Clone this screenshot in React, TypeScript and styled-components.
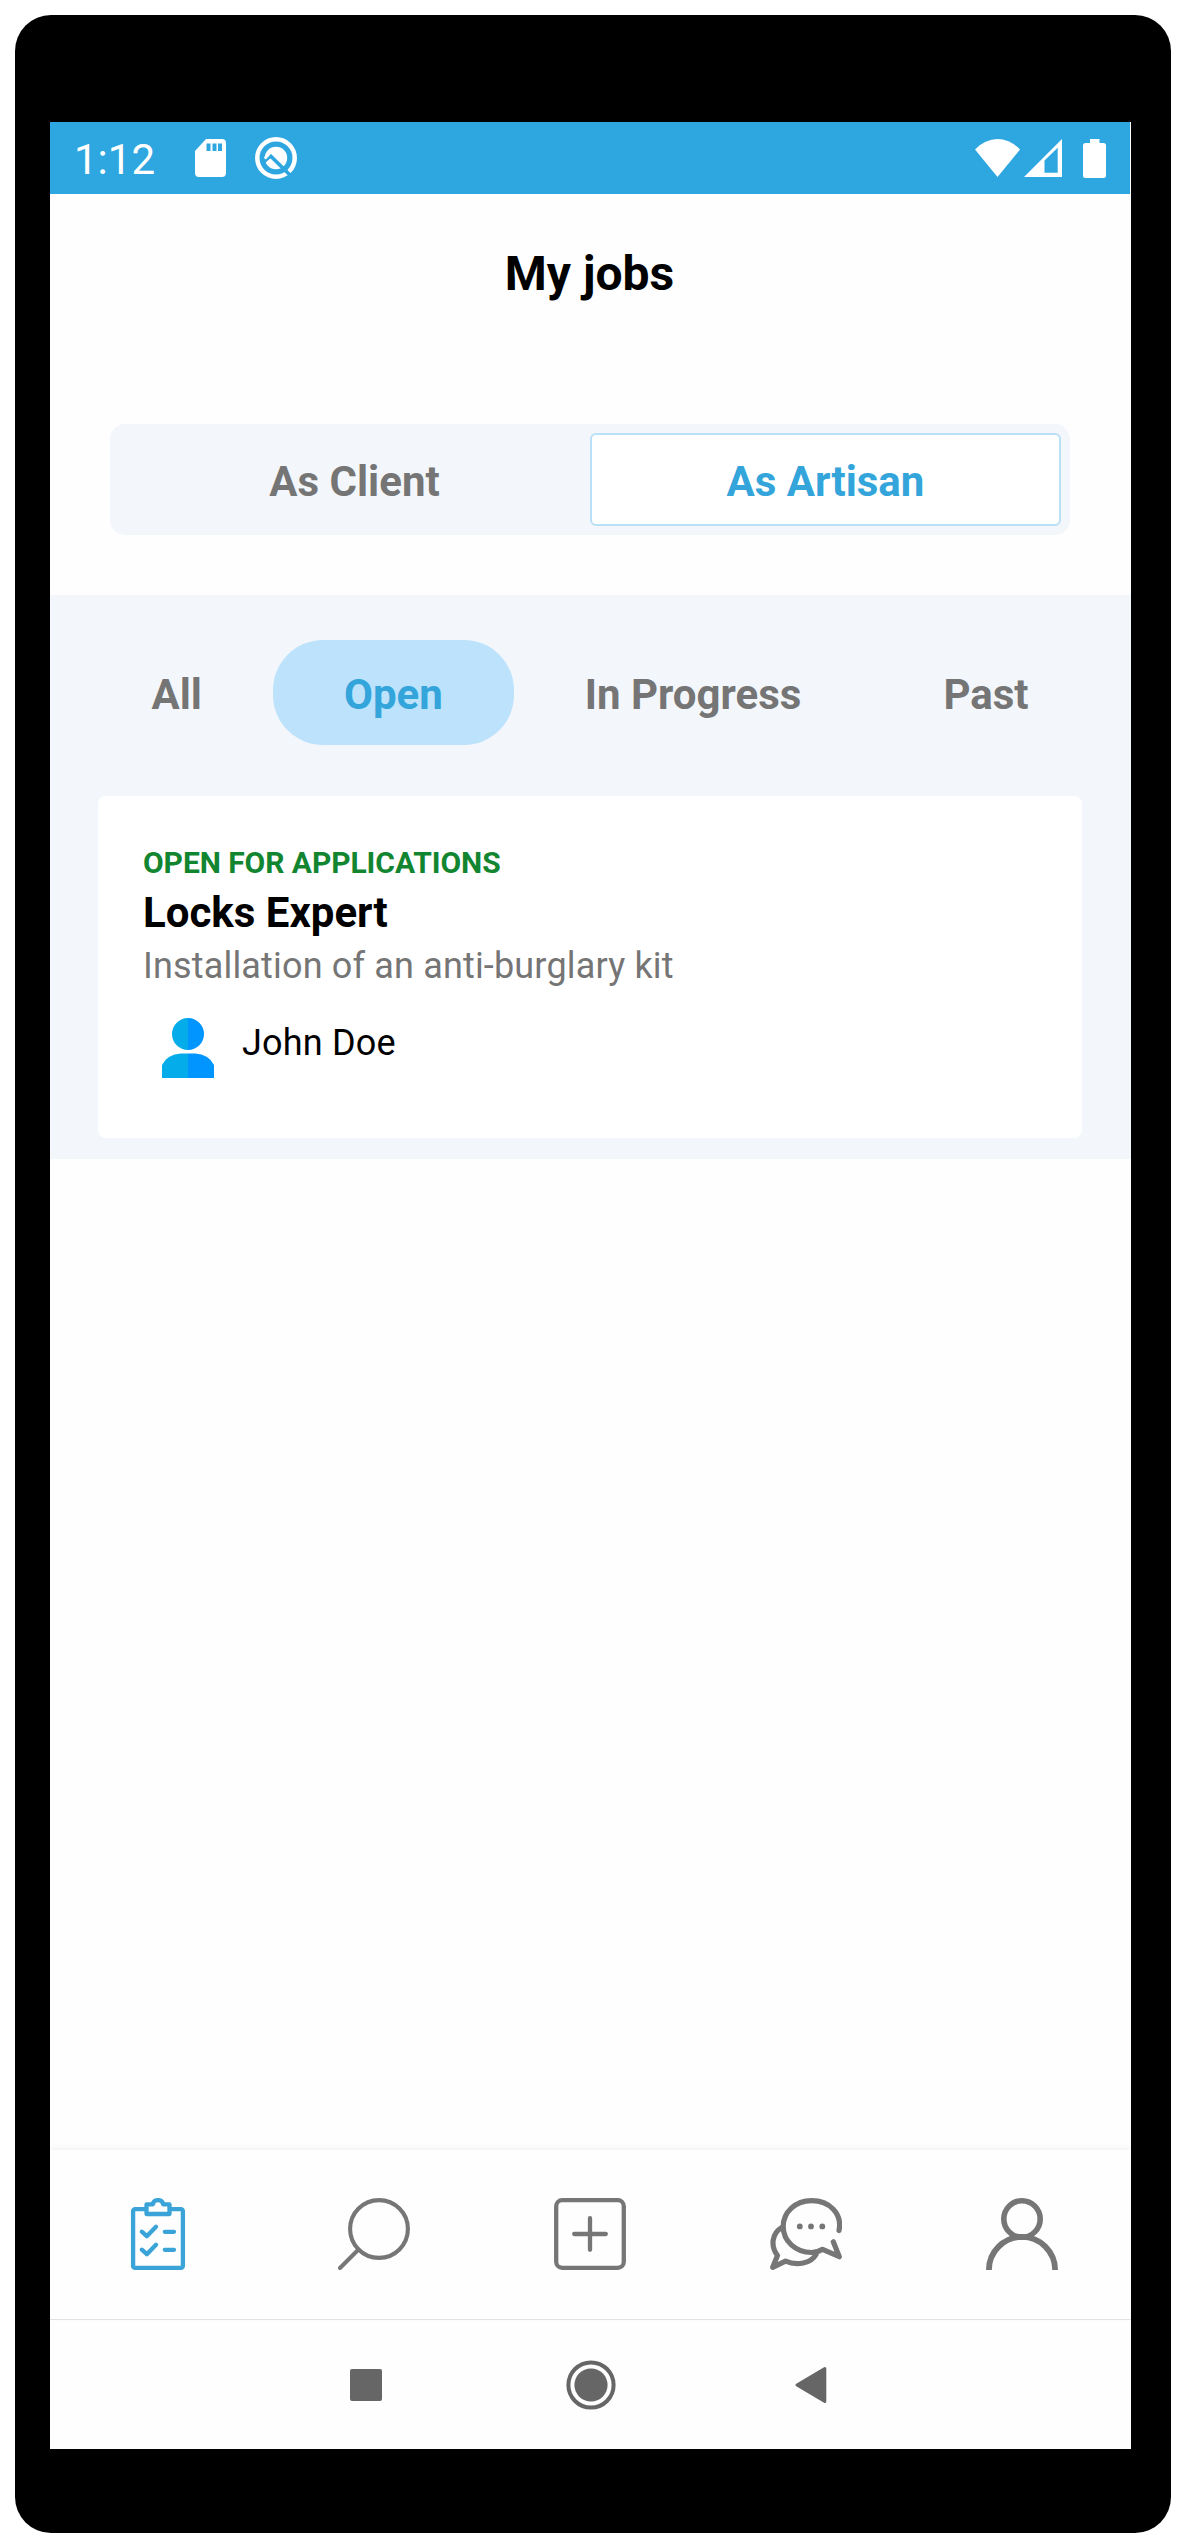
import React from "react";
import styled, { createGlobalStyle } from "styled-components";

const BLUE = "#2ea6e0";
const TEXT_BLUE = "#33a5db";
const GREY = "#757575";

const GlobalStyle = createGlobalStyle`
  *, *::before, *::after { box-sizing: border-box; }
  html, body { margin: 0; background: #fff; }
  body { font-family: Roboto, "Liberation Sans", sans-serif; color: #000; }
  button { border: 0; background: none; padding: 0; font: inherit; color: inherit; }
  svg { display: block; flex: none; }
`;

const Page = styled.div`
  width: 1184px;
  height: 2544px;
  padding: 15px 13px 11px 15px;
  background: #fff;
`;

const Device = styled.div`
  height: 2518px;
  padding: 107px 40px 84px 35px;
  border-radius: 36px;
  background: #000;
`;

const Screen = styled.main`
  display: flex;
  flex-direction: column;
  height: 2327px;
  background: #fefefe;
`;

const StatusBar = styled.header`
  display: flex;
  align-items: center;
  height: 72px;
  padding: 0 24px 0 24px;
  margin-right: 1px;
  background: ${BLUE};
  color: #fff;
`;

const Clock = styled.time`
  width: 121px;
  padding-top: 3px;
  font-size: 42px;
  line-height: 48px;
`;

const StatusGroup = styled.div<{ $gap: number; $end?: boolean }>`
  display: flex;
  align-items: center;
  gap: ${(p) => p.$gap}px;
  margin-left: ${(p) => (p.$end ? "auto" : "0")};
`;

const BatterySlot = styled.span`
  padding-left: 17px;
`;

const Title = styled.h1`
  margin: 0;
  padding: 50px 2px 0 0;
  height: 230px;
  font-size: 48px;
  font-weight: 700;
  line-height: 60px;
  text-align: center;
`;

const Segmented = styled.div`
  display: flex;
  height: 111px;
  margin: 0 61px 60px 60px;
  padding: 9px;
  border-radius: 15px;
  background: #f3f7fc;
`;

const Segment = styled.button<{ $active?: boolean }>`
  flex: 1;
  padding-top: 4px;
  border: 2px solid ${(p) => (p.$active ? "#b9e0f7" : "transparent")};
  border-radius: 6px;
  background: ${(p) => (p.$active ? "#fff" : "transparent")};
  color: ${(p) => (p.$active ? TEXT_BLUE : GREY)};
  font-size: 42px;
  font-weight: 700;
`;

const Jobs = styled.section`
  height: 564px;
  padding: 45px 49px 21px 48px;
  background: #f3f7fc;
`;

const Filters = styled.nav`
  display: flex;
  justify-content: center;
  height: 105px;
  margin-bottom: 51px;
`;

const Filter = styled.button<{ $active?: boolean }>`
  padding: 4px 71px 0;
  border-radius: 50px;
  background: ${(p) => (p.$active ? "#bde2fb" : "transparent")};
  color: ${(p) => (p.$active ? TEXT_BLUE : GREY)};
  font-size: 42px;
  font-weight: 700;
  white-space: nowrap;
`;

const Card = styled.article`
  display: flex;
  flex-direction: column;
  height: 342px;
  padding: 49px 45px 0;
  border-radius: 8px;
  background: #fff;
`;

const JobStatus = styled.div`
  color: #11852f;
  font-size: 30px;
  font-weight: 700;
  line-height: 36px;
  letter-spacing: -0.06px;
`;

const JobTitle = styled.h2`
  margin: 7px 0 0;
  font-size: 42px;
  font-weight: 700;
  line-height: 50px;
`;

const JobText = styled.p`
  margin: 6px 0 30px;
  color: ${GREY};
  font-size: 36px;
  line-height: 44px;
  letter-spacing: 0.17px;
`;

const Person = styled.div`
  display: flex;
  gap: 28px;
  padding-left: 19px;
`;

const PersonName = styled.span`
  padding-top: 3px;
  font-size: 36px;
  line-height: 44px;
  letter-spacing: 0.17px;
`;

const Spacer = styled.div`
  flex: 1;
`;

const TabBar = styled.nav`
  display: flex;
  height: 170px;
  padding-right: 1px;
  border-bottom: 1px solid #e2e2e2;
  box-shadow: 0 -2px 5px rgba(0, 0, 0, 0.05);
  background: #fefefe;
`;

const Tab = styled.button<{ $active?: boolean }>`
  display: flex;
  flex: 1;
  justify-content: center;
  padding-top: 48px;
  color: ${(p) => (p.$active ? "#3aa4d8" : "#767676")};
`;

const SystemBar = styled.footer`
  display: grid;
  grid-template-columns: 216px 229px 32px;
  justify-content: start;
  align-items: center;
  height: 129px;
  padding-left: 300px;
  color: #666;
`;

const SdCard = () => (
  <svg width="31" height="38" viewBox="0 0 31 38">
    <path fill="#fff" fillRule="evenodd" d="M11 0H27Q31 0 31 4V34Q31 38 27 38H4Q0 38 0 34V12ZM11.5 4.5V12H15.5V4.5ZM17.5 4.5V12H21.5V4.5ZM23 4.5V12H27V4.5Z" />
  </svg>
);

const DebugBadge = () => (
  <svg width="42" height="42" viewBox="0 0 42 42">
    <circle cx="21" cy="21" r="18.700" fill="none" stroke="#fff" strokeWidth="4.500" />
    <circle cx="21" cy="21" r="11.200" fill="#fff" />
    <path d="M8 25.500L15.500 19L36 39" fill="none" stroke={BLUE} strokeWidth="3.600" />
    <path d="M9.800 21.500L15.500 15.500" fill="none" stroke="#fff" strokeWidth="2.600" />
  </svg>
);

const Wifi = () => (
  <svg width="45" height="38" viewBox="0 0 45 38">
    <path fill="#fff" d="M0 10.5Q10 0 22.5 0T45 10.5L22.5 38Z" />
  </svg>
);

const Signal = () => (
  <svg width="38" height="38" viewBox="0 0 38 38">
    <path fill="#fff" fillRule="evenodd" d="M0 38L38 0V38ZM20.5 21.5V33.7H33.7V8.7Z" />
  </svg>
);

const Battery = () => (
  <svg width="23" height="39" viewBox="0 0 23 39">
    <path fill="#fff" d="M7 0H16.5V4H20.5Q23 4 23 6.5V36.5Q23 39 20.5 39H2.5Q0 39 0 36.5V6.5Q0 4 2.5 4H7Z" />
  </svg>
);

const Avatar = () => (
  <svg width="52" height="60" viewBox="0 0 52 60">
    <path fill="#04ade9" d="M26 0A16 16 0 0 0 26 32ZM26 35.5H19Q5 36.5 0 47V60H26Z" />
    <path fill="#0095ff" d="M26 0A16 16 0 0 1 26 32ZM26 35.5H33Q47 36.5 52 47V60H26Z" />
  </svg>
);

const TabIcon = ({ children }: { children: React.ReactNode }) => (
  <svg width="72" height="72" viewBox="0 0 72 72" fill="none" stroke="currentColor" strokeWidth="4.3" strokeLinecap="round" strokeLinejoin="round">
    {children}
  </svg>
);

const ClipboardIcon = () => (
  <TabIcon>
    <rect x="11.1" y="11.1" width="49.8" height="58.8" rx="2" />
    <path fill="#fefefe" d="M24.5 16V6.4H30.8C31.7 .7 40.3 .7 41.2 6.4H47.5V16Z" />
    <path d="M19.8 33.7L24.8 38.2L34 28.7M42.8 33.8H52M19.8 51.7L24.8 56.2L34 46.7M42.8 51.8H52" />
  </TabIcon>
);

const SearchIcon = () => (
  <TabIcon>
    <circle cx="41" cy="31" r="28.9" strokeWidth="4.1" />
    <path d="M20.5 51.5L2 70" strokeWidth="4" />
  </TabIcon>
);

const AddIcon = () => (
  <TabIcon>
    <rect x="2.2" y="2.2" width="67.6" height="67.6" rx="6" />
    <path d="M36 20.2V51.8M20.2 36H51.8" />
  </TabIcon>
);

const ChatIcon = () => (
  <TabIcon>
    <g strokeWidth="5.2">
      <path d="M69 32.5C72.5 15.5 59.5 2.6 41.5 2.6C25.5 2.6 13.2 14 13.2 28.5C13.2 43 25.5 54.5 41.5 54.5Q47.5 54.5 52.6 51.3L69.3 58.7L63.3 43.8" />
      <path d="M11.8 29.5C1.5 35.5 .5 48.5 7.5 57.5L2.7 69.3L15.5 63.2C27 68 41 65.5 46 56.5" />
    </g>
    <g fill="currentColor" stroke="none">
      <circle cx="29.8" cy="28.4" r="2.9" />
      <circle cx="41" cy="28.4" r="2.9" />
      <circle cx="52.3" cy="28.4" r="2.9" />
    </g>
  </TabIcon>
);

const ProfileIcon = () => (
  <TabIcon>
    <circle cx="36" cy="21" r="18.2" strokeWidth="5.6" />
    <path d="M2.9 72A33.1 33.1 0 0 1 69.1 72" strokeWidth="5.8" strokeLinecap="butt" />
  </TabIcon>
);

const RecentsKey = () => (
  <svg width="32" height="32" viewBox="0 0 32 32"><rect width="32" height="32" rx="2" fill="currentColor" /></svg>
);

const HomeKey = () => (
  <svg width="50" height="50" viewBox="0 0 50 50">
    <circle cx="25" cy="25" r="22.6" fill="none" stroke="currentColor" strokeWidth="4" />
    <circle cx="25" cy="25" r="16.6" fill="currentColor" />
  </svg>
);

const BackKey = () => (
  <svg width="32" height="38" viewBox="0 0 32 38">
    <path d="M2 19L29.8 2.5V35.5Z" fill="currentColor" stroke="currentColor" strokeWidth="3" strokeLinejoin="round" />
  </svg>
);

const filters = ["All", "Open", "In Progress", "Past"];

const tabs = [
  { name: "Jobs", Icon: ClipboardIcon },
  { name: "Search", Icon: SearchIcon },
  { name: "Add", Icon: AddIcon },
  { name: "Messages", Icon: ChatIcon },
  { name: "Profile", Icon: ProfileIcon },
];

export default function App() {
  return (
    <>
      <GlobalStyle />
      <Page>
        <Device>
          <Screen>
            <StatusBar>
              <Clock>1:12</Clock>
              <StatusGroup $gap={29}>
                <SdCard />
                <DebugBadge />
              </StatusGroup>
              <StatusGroup $gap={4} $end>
                <Wifi />
                <Signal />
                <BatterySlot><Battery /></BatterySlot>
              </StatusGroup>
            </StatusBar>
            <Title>My jobs</Title>
            <Segmented>
              <Segment>As Client</Segment>
              <Segment $active>As Artisan</Segment>
            </Segmented>
            <Jobs>
              <Filters>
                {filters.map((label) => (
                  <Filter key={label} $active={label === "Open"}>{label}</Filter>
                ))}
              </Filters>
              <Card>
                <JobStatus>OPEN FOR APPLICATIONS</JobStatus>
                <JobTitle>Locks Expert</JobTitle>
                <JobText>Installation of an anti-burglary kit</JobText>
                <Person>
                  <Avatar />
                  <PersonName>John Doe</PersonName>
                </Person>
              </Card>
            </Jobs>
            <Spacer />
            <TabBar>
              {tabs.map(({ name, Icon }) => (
                <Tab key={name} $active={name === "Jobs"}><Icon /></Tab>
              ))}
            </TabBar>
            <SystemBar>
              <RecentsKey />
              <HomeKey />
              <BackKey />
            </SystemBar>
          </Screen>
        </Device>
      </Page>
    </>
  );
}
